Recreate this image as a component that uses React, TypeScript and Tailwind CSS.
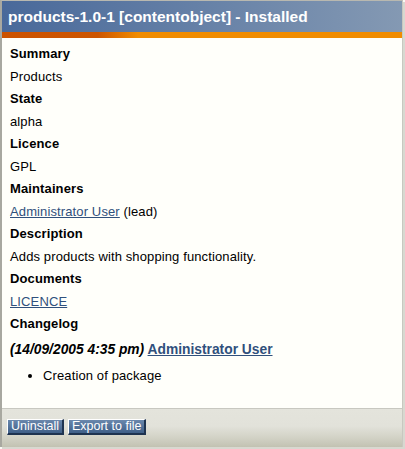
import React from "react";

const F = { fontFamily: '"Liberation Sans", Arial, sans-serif' };

export default function App() {
  return (
    <div className="w-[405px] h-[449px] bg-[#fafaf5] overflow-hidden" style={F}>
      <div className="w-[403px] h-[447px] flex flex-col border-t border-[#b8b8b0] border-l-2 border-l-[#a8a8a0] border-r border-r-[#c8c8c0] shadow-[2px_2px_0_#d8d8d0]">
        <div className="h-[31px] shrink-0 bg-gradient-to-r from-[#49699a] to-[#8499b3] flex items-center pl-[6px] text-white font-bold text-[15.5px] leading-none">
          products-1.0-1 [contentobject] - Installed
        </div>
        <div className="h-[6px] shrink-0 bg-[linear-gradient(to_right,#cc5200_0%,#cc5500_24%,#f08c00_34%,#f08c00_100%)]" />
        <div className="flex-1 bg-[#fffffa] pl-[8px] pt-[5px] text-[13px] tracking-[0.12px] text-black border-b border-[#c8c8c0]">
          <div className="font-bold leading-[22.5px]">Summary</div>
          <div className="leading-[22.5px]">Products</div>
          <div className="font-bold leading-[22.5px]">State</div>
          <div className="leading-[22.5px]">alpha</div>
          <div className="font-bold leading-[22.5px]">Licence</div>
          <div className="leading-[22.5px]">GPL</div>
          <div className="font-bold leading-[22.5px]">Maintainers</div>
          <div className="leading-[22.5px]">
            <a className="text-[#30507c] underline">Administrator User</a> (lead)
          </div>
          <div className="font-bold leading-[22.5px]">Description</div>
          <div className="leading-[22.5px]">Adds products with shopping functionality.</div>
          <div className="font-bold leading-[22.5px]">Documents</div>
          <div className="leading-[22.5px]">
            <a className="text-[#30507c] underline">LICENCE</a>
          </div>
          <div className="font-bold leading-[22.5px]">Changelog</div>
          <div className="leading-[25px] mt-[1px] font-bold text-[13.8px] tracking-normal">
            <i>(14/09/2005 4:35 pm)</i>{" "}
            <a className="text-[#30507c] underline">Administrator User</a>
          </div>
          <ul className="list-disc pl-[33px] leading-[25px] mt-[1px]">
            <li>Creation of package</li>
          </ul>
        </div>
        <div className="h-[38px] shrink-0 bg-[linear-gradient(to_bottom,#e4e4dc_0%,#e2e2da_45%,#d2d2c6_75%,#c2c2b2_100%)] flex items-start pt-[10px] pl-[5px] gap-[4px]">
          <button className="h-[16px] px-[3px] text-[12.5px] leading-none text-white bg-gradient-to-b from-[#6a88ad] to-[#3f5f88] border-t border-l border-t-white border-l-white border-r-2 border-b-2 border-r-[#1e3350] border-b-[#1e3350]">
            Uninstall
          </button>
          <button className="h-[16px] px-[3px] text-[12.5px] leading-none text-white bg-gradient-to-b from-[#6a88ad] to-[#3f5f88] border-t border-l border-t-white border-l-white border-r-2 border-b-2 border-r-[#1e3350] border-b-[#1e3350]">
            Export to file
          </button>
        </div>
      </div>
    </div>
  );
}
